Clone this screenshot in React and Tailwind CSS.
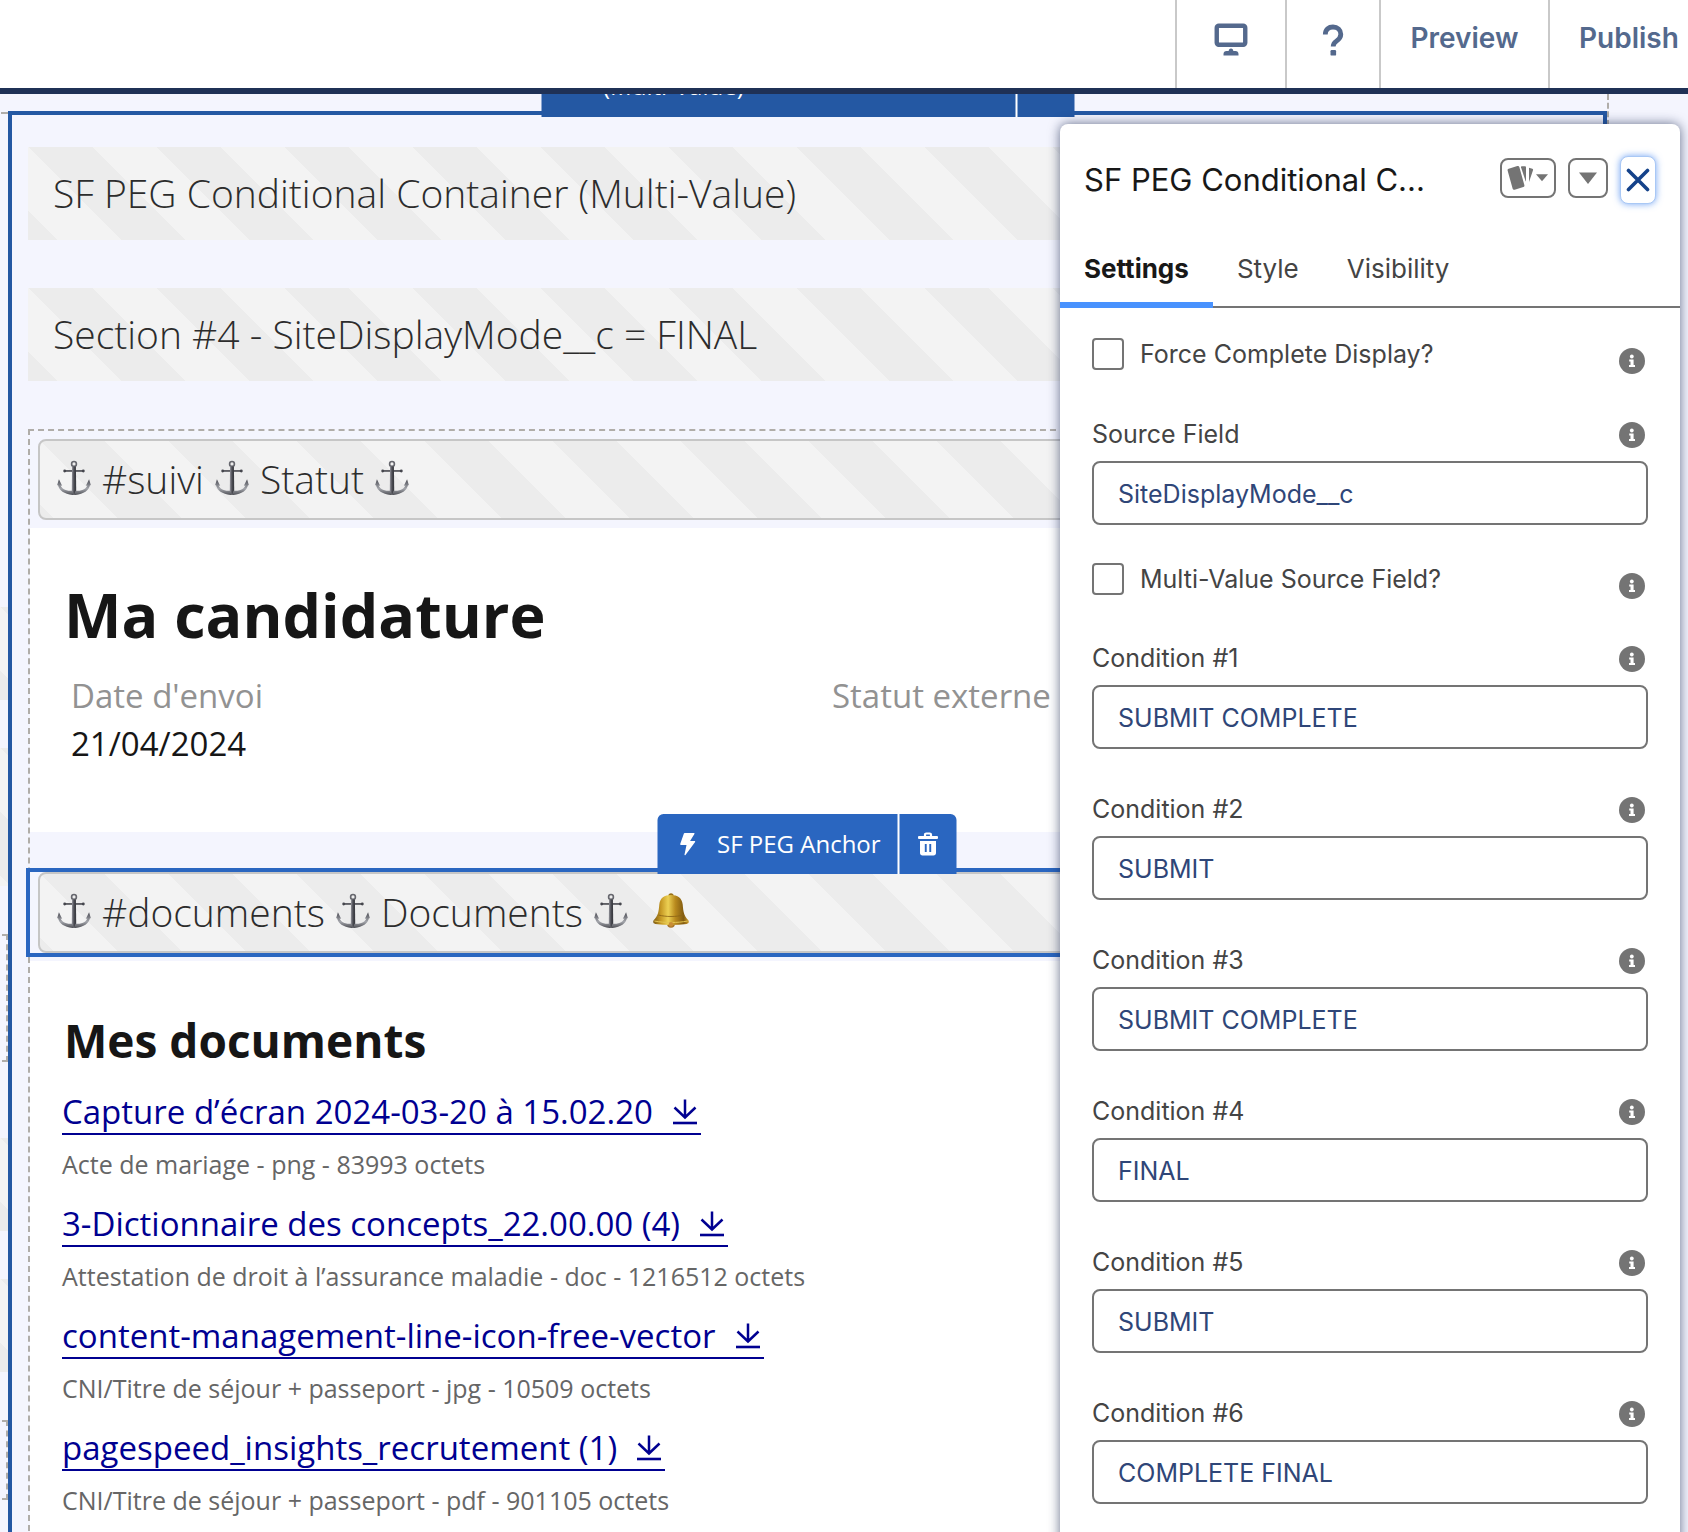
import React, { useState } from 'react';

const stripes =
  'bg-[linear-gradient(45deg,#ececec_25%,#f3f3f3_25%,#f3f3f3_50%,#ececec_50%,#ececec_75%,#f3f3f3_75%)] bg-[length:128px_128px]';

function MonitorIcon() {
  return (
    <svg width="34" height="34" viewBox="0 0 34 34" aria-hidden="true">
      <rect x="2.75" y="2.75" width="28.5" height="19" rx="2" fill="none" stroke="#54698d" strokeWidth="4.400" />
      <path d="M17 25.500c1.400 0 2.300.9 2.300 2.500h2.200c1.800 0 3 1.300 3 3v1.500H9.500V31c0-1.700 1.200-3 3-3h2.200c0-1.600.9-2.500 2.300-2.500z" fill="#54698d" />
    </svg>
  );
}

function HelpIcon() {
  return (
    <svg width="24" height="34" viewBox="0 0 24 34" aria-hidden="true">
      <path d="M4.300 11.500C4.300 6.500 7.700 4 12 4c4.500 0 7.800 3 7.800 7.300 0 3.700-2.300 5.500-4.500 6.900-2.300 1.500-3.100 2.600-3.100 5.300" fill="none" stroke="#54698d" strokeWidth="4.800" />
      <rect x="9.500" y="27" width="5.600" height="5.600" rx="1.200" fill="#54698d" />
    </svg>
  );
}

function BoltIcon() {
  return (
    <svg width="16" height="23" viewBox="0 0 16 23" aria-hidden="true">
      <path d="M5.200 0h9.200c.5 0 .8.5.5.900L10.600 8h4.500c.6 0 .9.6.5 1L6 22c-.4.6-1.200.2-1-.5L7 12H1.300c-.5 0-.8-.4-.6-.9L4.400.6c.1-.4.4-.6.8-.6z" fill="#fff" />
    </svg>
  );
}

function TrashIcon() {
  return (
    <svg width="21" height="24" viewBox="0 0 21 24" aria-hidden="true">
      <path d="M7.500 4.500V2.800c0-.8.5-1.300 1.300-1.300h3.400c.8 0 1.300.5 1.300 1.300v1.700" fill="none" stroke="#fff" strokeWidth="2.200" />
      <rect x="0.500" y="4" width="20" height="3" rx="1" fill="#fff" />
      <path fillRule="evenodd" d="M2.500 9h16v12c0 1.500-1 2.500-2.500 2.500H5c-1.500 0-2.500-1-2.500-2.500zM7.300 12v8h1.900v-8zM11.800 12v8h1.900v-8z" fill="#fff" />
    </svg>
  );
}

function AnchorIcon() {
  return (
    <svg width="34" height="36" viewBox="19 28 106 108" className="mb-1 shrink-0" aria-hidden="true">
      <defs>
        <linearGradient id="steel" x1="0" x2="1" y1="0" y2="0">
          <stop offset="0" stopColor="#9a9aa2" />
          <stop offset="0.500" stopColor="#4a4b52" />
          <stop offset="1" stopColor="#34353b" />
        </linearGradient>
        <linearGradient id="arms" x1="0" x2="0" y1="0" y2="1">
          <stop offset="0" stopColor="#4b4c54" />
          <stop offset="0.600" stopColor="#a3a5ab" />
          <stop offset="1" stopColor="#4e4f55" />
        </linearGradient>
      </defs>
      <circle cx="72" cy="38" r="7.500" fill="none" stroke="#66676e" strokeWidth="5" />
      <path d="M43 60h58" stroke="#45464d" strokeWidth="5" />
      <circle cx="43" cy="60" r="4.500" fill="#45464d" />
      <circle cx="101" cy="60" r="4.500" fill="#45464d" />
      <path d="M66 46h12l1 82-7 7-7-7z" fill="url(#steel)" />
      <path d="M25 86l10 20-5-1c5 12 20 17 37 17l5 13-5 0C42 133 25 120 22 104l-3 1z" fill="url(#arms)" />
      <path d="M119 86l-10 20 5-1c-5 12-20 17-37 17l-5 13 5 0c25-2 42-15 45-31l3 1z" fill="url(#arms)" />
    </svg>
  );
}

function BellIcon() {
  return (
    <svg width="36" height="35" viewBox="202 26 108 105" className="mb-1 ml-[14px] shrink-0" aria-hidden="true">
      <defs>
        <linearGradient id="gold" x1="0" x2="1" y1="0" y2="0">
          <stop offset="0" stopColor="#7d5a12" />
          <stop offset="0.220" stopColor="#c79a25" />
          <stop offset="0.420" stopColor="#ecd053" />
          <stop offset="0.620" stopColor="#b98a1e" />
          <stop offset="0.850" stopColor="#825b10" />
          <stop offset="1" stopColor="#c9982a" />
        </linearGradient>
      </defs>
      <path d="M248 35c0-5 3-8 8-8s8 3 8 8z" fill="#9a7218" />
      <circle cx="256" cy="119" r="11.500" fill="#a8742a" />
      <path d="M256 32c20 0 33 9 35 28 2 22 3 34 17 48 3 5 1 10-5 11-30 4-64 4-94 0-6-1-8-6-5-11 14-14 15-26 17-48 2-19 15-28 35-28z" fill="url(#gold)" />
      <path d="M218 92c24 6 52 6 76 0" fill="none" stroke="#8a6315" strokeWidth="2.500" />
      <path d="M206 110c30 6 70 6 100 0" fill="none" stroke="#e3c453" strokeWidth="3" />
      <circle cx="256" cy="120" r="7" fill="#c98d35" />
    </svg>
  );
}

function DownloadIcon() {
  return (
    <svg width="24" height="26" viewBox="0 0 24 26" aria-hidden="true" className="shrink-0">
      <path d="M12 0.500V18M1.500 8.500L12 18.500 22.500 8.500" fill="none" stroke="#000091" strokeWidth="2.500" />
      <path d="M0 24h24" stroke="#000091" strokeWidth="2.600" />
    </svg>
  );
}

function StyleIcon() {
  return (
    <svg width="52" height="36" viewBox="36 45 156 108" aria-hidden="true" className="shrink-0" fill="#747474">
      <path d="M56 71l26-8c3-1 5 0 6 3l15 54c1 3 0 5-3 6l-26 8c-3 1-5 0-6-3L53 77c-1-3 0-5 3-6z" />
      <path d="M94 64h11c2 0 3 1 3 3v42h-1L93 67z" />
      <path d="M117 68l10 3c2 1 3 3 2 5l-12 35z" />
      <path d="M138 88h36l-18 21z" />
    </svg>
  );
}

function InfoButton({ label, className }) {
  return (
    <button type="button" aria-label={`Help: ${label}`} className={className}>
      <svg width="26" height="26" viewBox="0 0 26 26" aria-hidden="true">
        <circle cx="13" cy="13" r="13" fill="#747474" />
        <circle cx="12.800" cy="8.500" r="1.900" fill="#fff" />
        <path d="M10.200 11.500h4.400v5.600h1.400v2H10v-2h1.500v-3.600h-1.300z" fill="#fff" />
      </svg>
    </button>
  );
}

function TopBar() {
  const cell = 'flex items-center border-l-2 border-[#c9c9c9] pb-3';
  const text = 'text-[28px] font-semibold text-[#54698d]';
  return (
    <header className="flex h-[94px] shrink-0 justify-end border-b-[6px] border-[#1f3156] bg-white">
      <button type="button" aria-label="Desktop view" className={`${cell} w-[110px] justify-center`}><span className="pt-1"><MonitorIcon /></span></button>
      <button type="button" aria-label="Help" className={`${cell} w-[94px] justify-center`}><span className="pt-1"><HelpIcon /></span></button>
      <button type="button" className={`${cell} ${text} w-[169px] justify-center`}>Preview</button>
      <button type="button" className={`${cell} ${text} w-[140px] pl-[29px]`}>Publish</button>
    </header>
  );
}

function Gutter() {
  return (
    <div className="flex w-2 shrink-0 flex-col" aria-hidden="true">
      <div className="mt-[18px] ml-px h-[3px] border-t-2 border-dashed border-[#b0ada9]" />
      <div className={`mt-[492px] h-[93px] ${stripes}`} />
      <div className={`mt-12 h-[138px] ${stripes}`} />
      <div className="mt-12 ml-0.5 h-32 border-y-2 border-r-2 border-dashed border-[#b0ada9]" />
      <div className={`mt-[76px] h-[93px] ${stripes}`} />
      <div className={`mt-12 h-[93px] ${stripes}`} />
      <div className="mt-12 ml-0.5 h-20 border-y-2 border-r-2 border-dashed border-[#b0ada9]" />
    </div>
  );
}

function TextBlock({ children }) {
  return (
    <div className={`mb-12 flex h-[93px] items-center px-[25px] text-[39px] font-light text-[#2c2c2c] ${stripes}`}>
      {children}
    </div>
  );
}

function AnchorBar({ id, title, bell }) {
  return (
    <div className={`flex h-[81px] items-center gap-[11px] rounded-lg border-2 border-[#c6c6c6] px-[17px] text-[39px] font-light text-[#2c2c2c] ${stripes}`}>
      <AnchorIcon />
      <span>{id}</span>
      <AnchorIcon />
      <span>{title}</span>
      <AnchorIcon />
      {bell && <BellIcon />}
    </div>
  );
}

const files = [
  ['Capture d’écran 2024-03-20 à 15.02.20', 'Acte de mariage - png - 83993 octets'],
  ['3-Dictionnaire des concepts_22.00.00 (4)', 'Attestation de droit à l’assurance maladie - doc - 1216512 octets'],
  ['content-management-line-icon-free-vector', 'CNI/Titre de séjour + passeport - jpg - 10509 octets'],
  ['pagespeed_insights_recrutement (1)', 'CNI/Titre de séjour + passeport - pdf - 901105 octets'],
];

function Canvas() {
  return (
    <div className="relative mt-[17px] mr-[81px] min-w-0 flex-1 self-start border-4 border-[#2458a3] pt-8 pr-4 pl-4 font-['Open_Sans',sans-serif]">
      <div className="absolute -top-[98px] left-1/2 flex h-[100px] w-[533px] -translate-x-1/2 bg-[#2458a3] text-2xl leading-8 text-white">
        <div className="flex w-[476px] flex-col justify-end border-r-2 border-white pb-[15px] pl-[62px]">
          <span>(Multi-Value)</span>
        </div>
      </div>

      <TextBlock>SF PEG Conditional Container (Multi-Value)</TextBlock>
      <TextBlock>Section #4 - SiteDisplayMode__c = FINAL</TextBlock>

      <div className="border-2 border-dashed border-[#b0ada9]">
        <div className="p-2">
          <AnchorBar id="#suivi" title="Statut" />
        </div>

        <section className="bg-white pt-[51px] pb-16 pl-[34px]">
          <h1 className="text-[61px] leading-[72px] font-bold text-[#161616]">Ma candidature</h1>
          <dl className="mt-[21px] ml-[7px] grid grid-cols-2 gap-x-2 text-[33px] leading-[48px]">
            <div>
              <dt className="text-[#929292]">Date d'envoi</dt>
              <dd className="text-[#161616]">21/04/2024</dd>
            </div>
            <div>
              <dt className="text-[#929292]">Statut externe</dt>
            </div>
          </dl>
        </section>

        <div className="relative mt-9 mb-1 -mr-0.5 -ml-1 border-4 border-[#2a66c0] px-2">
          <AnchorBar id="#documents" title="Documents" bell />
          <div className="absolute -top-[58px] left-1/2 flex h-[60px] w-[299px] -translate-x-1/2 overflow-hidden rounded-t-md bg-[#2a66c0] text-2xl text-white">
            <div className="flex flex-1 items-center gap-[22px] border-r-2 border-white pl-[22px] whitespace-nowrap">
              <BoltIcon />
              <span>SF PEG Anchor</span>
            </div>
            <button type="button" aria-label="Delete SF PEG Anchor" className="flex w-[57px] items-center justify-center">
              <TrashIcon />
            </button>
          </div>
        </div>

        <section className="bg-white pt-[51px] pl-8">
          <h2 className="pl-0.5 text-[46px] leading-[56px] font-bold text-[#161616]">Mes documents</h2>
          <ul className="mt-[23px]">
            {files.map(([name, meta]) => (
              <li key={name} className="pb-[22px]">
                <a href="#documents" className="flex h-11 w-fit items-center gap-5 border-b-2 border-[#000091] pr-1 text-[33px] leading-[42px] whitespace-nowrap text-[#000091]">
                  {name}
                  <DownloadIcon />
                </a>
                <p className="mt-3 text-[25px] leading-[34px] text-[#666666]">{meta}</p>
              </li>
            ))}
          </ul>
        </section>
      </div>
    </div>
  );
}

function CheckField({ id, label, className }) {
  return (
    <div className={`flex h-8 items-center ${className}`}>
      <input id={id} type="checkbox" className="size-8 shrink-0 appearance-none rounded-sm border-2 border-[#747474] bg-white checked:bg-[#0176d3]" />
      <label htmlFor={id} className="flex-1 pl-4 text-[#444444]">{label}</label>
      <InfoButton label={label} className="mt-[14px] mr-[3px]" />
    </div>
  );
}

function TextField({ id, label, value, className }) {
  return (
    <div className={className}>
      <div className="flex h-8 items-center justify-between">
        <label htmlFor={id} className="text-[#444444]">{label}</label>
        <InfoButton label={label} className="mt-0.5 mr-[3px]" />
      </div>
      <input id={id} type="text" defaultValue={value} className="mt-[11px] h-16 w-full rounded-lg border-2 border-[#747474] bg-white px-6 pt-0.5 text-[#2f4678]" />
    </div>
  );
}

const conditions = ['SUBMIT COMPLETE', 'SUBMIT', 'SUBMIT COMPLETE', 'FINAL', 'SUBMIT', 'COMPLETE FINAL'];
const tabs = ['Settings', 'Style', 'Visibility'];

function PropertyPanel() {
  const [active, setActive] = useState('Settings');
  const boxed = 'flex h-10 items-center justify-center self-start mt-0.5 rounded-lg border-2 border-[#747474] bg-white';
  return (
    <aside className="absolute top-[30px] right-2 -bottom-6 w-[620px] rounded-t-lg bg-white shadow-[0_0_12px_rgba(20,35,75,0.65)]">
      <div className="flex h-20 items-end px-6">
        <div className="flex h-12 w-full items-center gap-3">
          <h2 className="min-w-0 flex-1 truncate text-[31px] text-[#181818]">SF PEG Conditional C...</h2>
          <button type="button" aria-label="Style options" className={`${boxed} w-14`}><StyleIcon /></button>
          <button type="button" aria-label="More actions" className={`${boxed} w-10`}>
            <svg width="20" height="12" viewBox="0 0 20 12" aria-hidden="true"><path d="M1 0.500h18L10 12z" fill="#747474" /></svg>
          </button>
          <button type="button" aria-label="Close" className="flex h-12 w-9 items-center justify-center rounded-lg border border-[#a9c8f5] bg-white shadow-[0_0_7px_rgba(70,135,240,0.75)]">
            <svg width="24" height="24" viewBox="0 0 24 24" aria-hidden="true" className="shrink-0">
              <path d="M2.500 2.500l19 19M21.500 2.500l-19 19" stroke="#14428a" strokeWidth="3.600" strokeLinecap="round" />
            </svg>
          </button>
        </div>
      </div>

      <div role="tablist" className="mt-[26px] flex h-[78px] border-b-2 border-[#747474] text-[26px]">
        {tabs.map((t) => (
          <button
            key={t}
            type="button"
            role="tab"
            aria-selected={active === t}
            onClick={() => setActive(t)}
            className={
              active === t
                ? '-mb-0.5 border-b-[6px] border-[#4992fe] px-6 pt-1 font-bold text-[#181818]'
                : 'px-6 text-[#444444]'
            }
          >
            {t}
          </button>
        ))}
      </div>

      <form className="px-8 pt-[30px] text-[25px] leading-8">
        <CheckField id="force" label="Force Complete Display?" className="mb-12" />
        <TextField id="source" label="Source Field" value="SiteDisplayMode__c" className="mb-[38px]" />
        <CheckField id="multi" label="Multi-Value Source Field?" className="mb-[47px]" />
        {conditions.map((value, i) => (
          <TextField key={i} id={`condition-${i + 1}`} label={`Condition #${i + 1}`} value={value} className="mb-11" />
        ))}
      </form>
    </aside>
  );
}

export default function App() {
  return (
    <div className="flex h-screen flex-col overflow-hidden bg-[#f4f5fe] font-['Inter',sans-serif]">
      <TopBar />
      <main className="relative flex min-h-0 flex-1 overflow-hidden">
        <Gutter />
        <Canvas />
        <div className="absolute top-0 right-[79px] h-8 border-l-2 border-dashed border-[#b0ada9]" aria-hidden="true" />
        <PropertyPanel />
      </main>
    </div>
  );
}
